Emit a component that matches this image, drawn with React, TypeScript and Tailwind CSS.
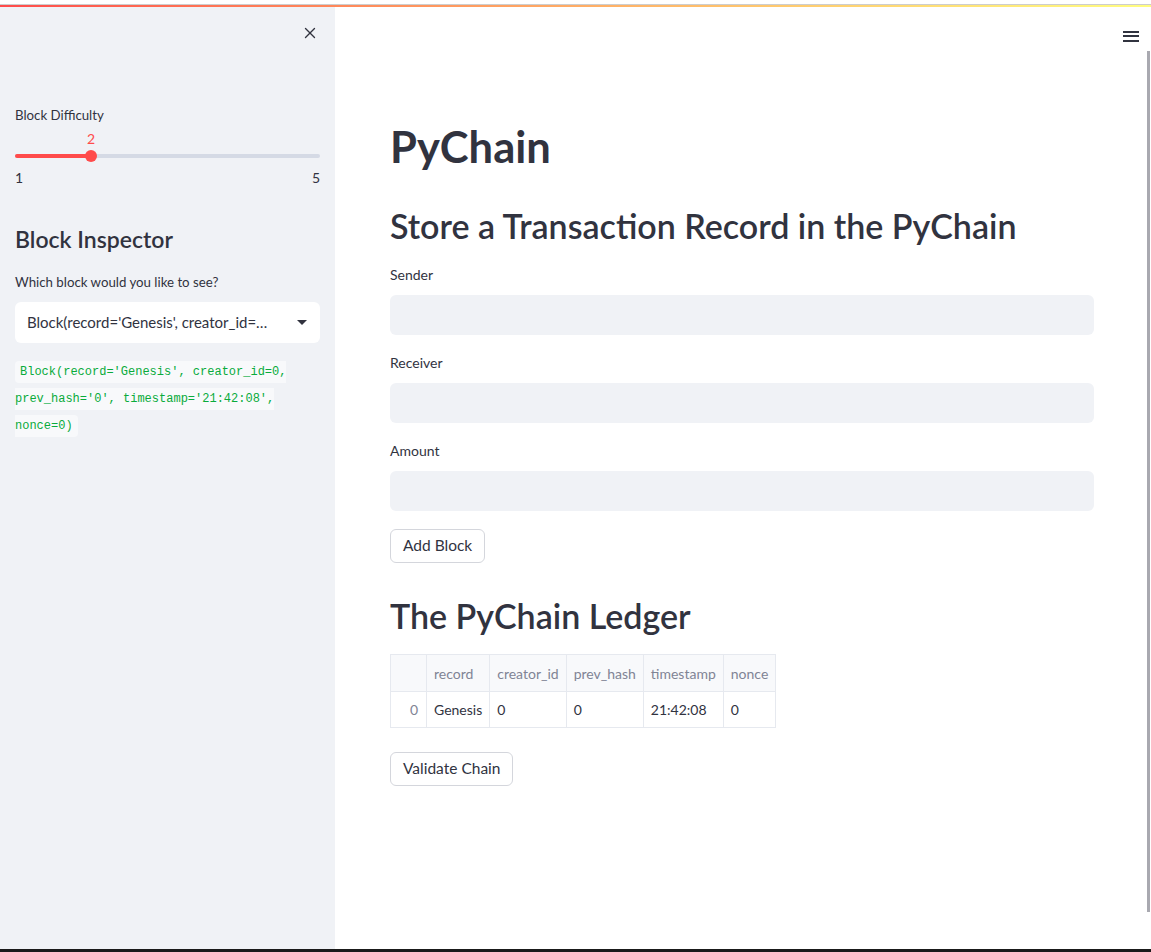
import { X } from "lucide-react";

const font = { fontFamily: "Lato, 'Noto Sans', sans-serif" };

function Slider() {
  return (
    <div>
      <div className="relative mt-[4px] h-[20px]">
        <span className="absolute left-[61px] top-0 w-[30px] text-center text-[14px] leading-5 text-[#ff4b4b]">2</span>
      </div>
      <div className="relative mt-[1px] h-[12px] flex items-center">
        <div className="h-[4px] w-full rounded-full bg-[#d5dae5]" />
        <div className="absolute left-0 h-[4px] w-[76px] rounded-full bg-[#ff4b4b]" />
        <div className="absolute left-[70px] h-[12px] w-[12px] rounded-full bg-[#ff4b4b]" />
      </div>
      <div className="flex justify-between text-[14px] text-[#31333f] mt-[6px] leading-5">
        <span>1</span>
        <span>5</span>
      </div>
    </div>
  );
}

function Sidebar() {
  return (
    <aside className="w-[335px] shrink-0 bg-[#f0f2f6] px-[15px] pt-[17px] flex flex-col">
      <div className="flex justify-end pr-[1px]">
        <X size={18} strokeWidth={1.8} className="text-[#31333f]" />
      </div>
      <div className="mt-[63px] text-[13.25px] text-[#31333f] leading-5">Block Difficulty</div>
      <Slider />
      <h2 className="mt-[35px] text-[23px] font-semibold text-[#31333f] leading-8">Block Inspector</h2>
      <div className="mt-[17px] text-[13.25px] text-[#31333f] leading-5">Which block would you like to see?</div>
      <div className="mt-[10px] h-[41px] rounded-[6px] bg-white flex items-center justify-between pl-[12px] pr-[13px]">
        <span className="text-[15px] text-[#31333f]">Block(record='Genesis', creator_id=…</span>
        <svg width="10" height="6" viewBox="0 0 10 6">
          <path d="M0 0h10L5 5z" fill="#31333f" />
        </svg>
      </div>
      <p
        className="mt-[15px] text-[12px] leading-[26px] text-[#09ab3b]"
        style={{ fontFamily: "'DejaVu Sans Mono', 'Liberation Mono', monospace" }}
      >
        <code className="bg-[#f8f9fb] rounded-[4px] px-[5px] py-[4px]">
          Block(record='Genesis', creator_id=0, prev_hash='0', timestamp='21:42:08', nonce=0)
        </code>
      </p>
    </aside>
  );
}

function Field({ label }: { label: string }) {
  return (
    <div className="flex flex-col">
      <label className="text-[14px] text-[#31333f] leading-5">{label}</label>
      <div className="mt-[10px] h-[40px] rounded-[6px] bg-[#f0f2f6]" />
    </div>
  );
}

function Button({ children }: { children: string }) {
  return (
    <button className="self-start h-[34px] px-[12px] rounded-[6px] border border-[#d4d6dc] bg-white text-[15.5px] text-[#31333f]">
      {children}
    </button>
  );
}

const cols = ["record", "creator_id", "prev_hash", "timestamp", "nonce"];
const row = ["Genesis", "0", "0", "21:42:08", "0"];
const widths = ["w-[61px]", "w-[74px]", "w-[77px]", "w-[79px]", "w-[52px]"];

function Ledger() {
  return (
    <table className="mt-[16px] border-collapse text-[14px] self-start">
      <thead>
        <tr className="h-[37px] bg-[#f8f9fb]">
          <th className="w-[36px] border border-[#e6e9ef]" />
          {cols.map((c, i) => (
            <th key={c} className={`${widths[i]} border border-[#e6e9ef] px-[7px] text-left font-normal text-[#808495]`}>
              {c}
            </th>
          ))}
        </tr>
      </thead>
      <tbody>
        <tr className="h-[36px]">
          <td className="border border-[#e6e9ef] pr-[8px] text-right text-[#808495]">0</td>
          {row.map((v, i) => (
            <td key={i} className={`${widths[i]} border border-[#e6e9ef] px-[7px] text-[#31333f]`}>
              {v}
            </td>
          ))}
        </tr>
      </tbody>
    </table>
  );
}

function Main() {
  return (
    <main className="relative flex-1 bg-white">
      <div className="absolute right-[12px] top-[23px]">
        <svg width="16" height="12" viewBox="0 0 16 12">
          <rect x="0" y="1" width="16" height="2" fill="#31333f" />
          <rect x="0" y="5" width="16" height="2" fill="#31333f" />
          <rect x="0" y="10" width="16" height="2" fill="#31333f" />
        </svg>
      </div>
      <div className="absolute right-[1px] top-[44px] h-[861px] w-[3px] bg-[#a9a9b0]" />
      <div className="ml-[55px] w-[704px] pt-[111px] flex flex-col">
        <h1 className="text-[43.5px] font-bold text-[#31333f] leading-[56px]">PyChain</h1>
        <h2 className="mt-[30px] text-[34px] font-semibold text-[#31333f] leading-[44px]">
          Store a Transaction Record in the PyChain
        </h2>
        <div className="mt-[17px] flex flex-col gap-[18px]">
          <Field label="Sender" />
          <Field label="Receiver" />
          <Field label="Amount" />
        </div>
        <div className="mt-[18px] flex flex-col">
          <Button>Add Block</Button>
        </div>
        <h2 className="mt-[31px] text-[34px] font-semibold text-[#31333f] leading-[44px]">The PyChain Ledger</h2>
        <Ledger />
        <div className="mt-[24px] flex flex-col">
          <Button>Validate Chain</Button>
        </div>
      </div>
    </main>
  );
}

export default function App() {
  return (
    <div className="h-[952px] w-[1151px] flex flex-col overflow-hidden bg-white" style={font}>
      <div className="h-[4px] shrink-0 bg-white" />
      <div className="h-[1px] shrink-0 bg-[#cdcdcd]" />
      <div className="h-[2px] shrink-0 bg-gradient-to-r from-[#ff4b4b] to-[#fffd80]" />
      <div className="flex flex-1 min-h-0">
        <Sidebar />
        <Main />
      </div>
      <div className="h-[3px] shrink-0 bg-[#1a1a1a]" />
    </div>
  );
}
